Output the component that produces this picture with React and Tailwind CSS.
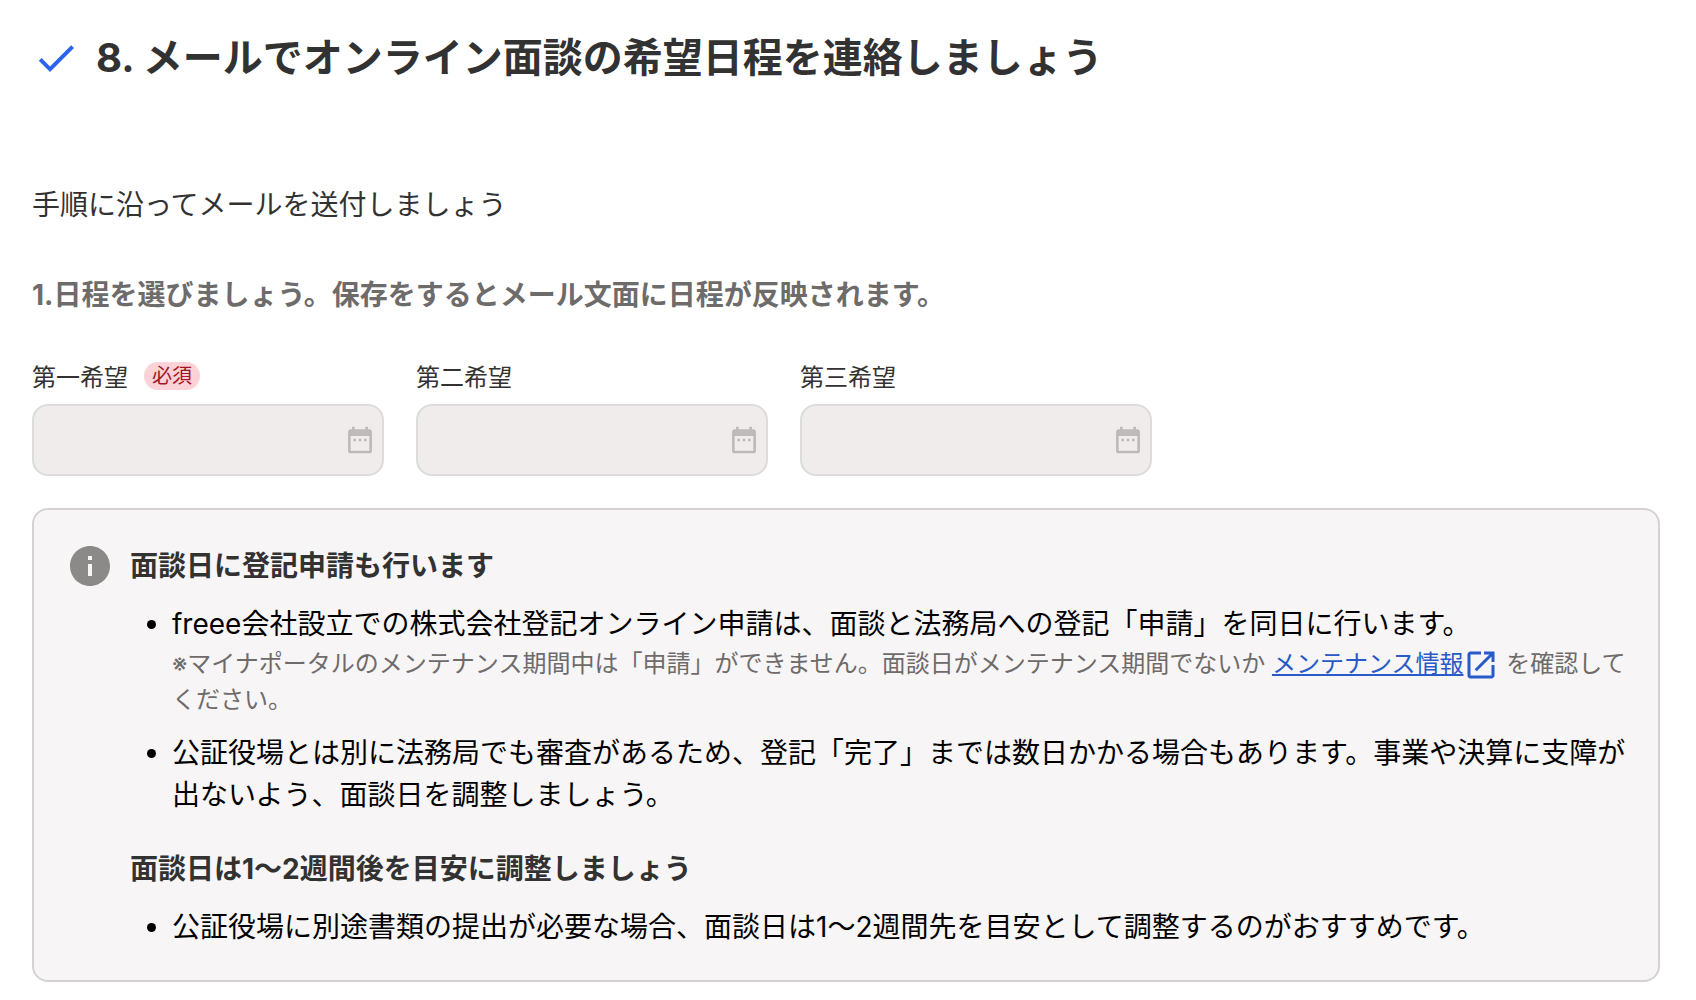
import React from 'react';

const dateFields = [
  { id: 'first-choice', label: '第一希望', required: true },
  { id: 'second-choice', label: '第二希望', required: false },
  { id: 'third-choice', label: '第三希望', required: false }
];

function CheckIcon() {
  return (
    <svg className="size-12 shrink-0 text-[#2864f0]" viewBox="0 0 24 24" fill="currentColor" aria-hidden="true">
      <path d="M9 16.2 4.8 12l-1.4 1.4L9 19 21 7l-1.4-1.4L9 16.2z" />
    </svg>
  );
}

function CalendarIcon() {
  return (
    <svg className="size-8 shrink-0 text-[#bebab9]" viewBox="0 0 24 24" fill="currentColor" aria-hidden="true">
      <path d="M9 11H7v2h2v-2zm4 0h-2v2h2v-2zm4 0h-2v2h2v-2zm2-7h-1V2h-2v2H8V2H6v2H5c-1.11 0-1.99.9-1.99 2L3 20c0 1.1.89 2 2 2h14c1.1 0 2-.9 2-2V6c0-1.1-.9-2-2-2zm0 16H5V9h14v11z" />
    </svg>
  );
}

function InfoIcon() {
  return (
    <svg className="size-12 shrink-0 text-[#8c8989]" viewBox="0 0 24 24" fill="currentColor" aria-hidden="true">
      <path d="M12 2C6.48 2 2 6.48 2 12s4.48 10 10 10 10-4.48 10-10S17.52 2 12 2zm1 15h-2v-6h2v6zm0-8h-2V7h2v2z" />
    </svg>
  );
}

function OpenInNewIcon() {
  return (
    <svg className="-my-1 inline-block size-9 align-middle" viewBox="0 0 24 24" fill="currentColor" aria-hidden="true">
      <path d="M19 19H5V5h7V3H5c-1.11 0-2 .9-2 2v14c0 1.1.89 2 2 2h14c1.1 0 2-.9 2-2v-7h-2v7zM14 3v2h3.59l-9.83 9.83 1.41 1.41L19 6.41V10h2V3h-7z" />
    </svg>
  );
}

function DateField({ id, label, required }) {
  return (
    <div className="w-[352px]">
      <div className="flex h-9 mb-2 gap-4">
        <label htmlFor={id} className="text-2xl leading-9">{label}</label>
        {required && (
          <span className="mt-0.5 h-7 rounded-full bg-[#fad2d7] px-2 text-xl leading-7 text-[#a51428]">必須</span>
        )}
      </div>
      <div className="flex h-[72px] items-center rounded-2xl border-2 border-[#dcdcdc] bg-[#f0eceb] pr-1.5 pl-4">
        <input id={id} type="text" disabled className="min-w-0 flex-1 bg-transparent text-2xl outline-none" />
        <CalendarIcon />
      </div>
    </div>
  );
}

export default function App() {
  return (
    <main
      lang="ja"
      className="min-h-screen bg-white px-8 pt-7 pb-4 text-[28px] leading-[42px] text-[#323232] font-['Inter','Noto_Sans_CJK_JP',sans-serif]"
    >
      <header className="flex items-center gap-4">
        <CheckIcon />
        <h1 className="text-[40px] leading-[60px] font-bold">8. メールでオンライン面談の希望日程を連絡しましょう</h1>
      </header>

      <p className="mt-24">手順に沿ってメールを送付しましょう</p>
      <h2 className="mt-12 font-bold text-[#6e6b6b]">
        1.日程を選びましょう。保存をするとメール文面に日程が反映されます。
      </h2>

      {/* Date pickers */}
      <div className="mt-11 flex flex-wrap gap-8">
        {dateFields.map((field) => (
          <DateField key={field.id} {...field} />
        ))}
      </div>

      {/* Notice */}
      <section className="mt-8 mr-1 flex gap-4 rounded-2xl border-2 border-[#d7d2d2] bg-[#f7f5f6] py-8 pr-6 pl-8">
        <InfoIcon />
        <div className="min-w-0 flex-1 pt-[3px]">
          <h3 className="font-bold">面談日に登記申請も行います</h3>
          <ul className="mt-4 list-disc space-y-3.5 pl-[42px] text-black">
            <li>
              <p>freee会社設立での株式会社登記オンライン申請は、面談と法務局への登記「申請」を同日に行います。</p>
              <p className="mt-px text-2xl leading-9 text-[#6e6b6b]">
                ※マイナポータルのメンテナンス期間中は「申請」ができません。面談日がメンテナンス期間でないか{' '}
                <a href="#maintenance" className="text-[#285ac8]">
                  <span className="underline">メンテナンス情報</span>
                  <OpenInNewIcon />
                </a>{' '}
                を確認してください。
              </p>
            </li>
            <li>
              公証役場とは別に法務局でも審査があるため、登記「完了」までは数日かかる場合もあります。事業や決算に支障が出ないよう、面談日を調整しましょう。
            </li>
          </ul>

          <h3 className="mt-8 font-bold">面談日は1〜2週間後を目安に調整しましょう</h3>
          <ul className="mt-4 list-disc pl-[42px] text-black">
            <li>公証役場に別途書類の提出が必要な場合、面談日は1〜2週間先を目安として調整するのがおすすめです。</li>
          </ul>
        </div>
      </section>
    </main>
  );
}
